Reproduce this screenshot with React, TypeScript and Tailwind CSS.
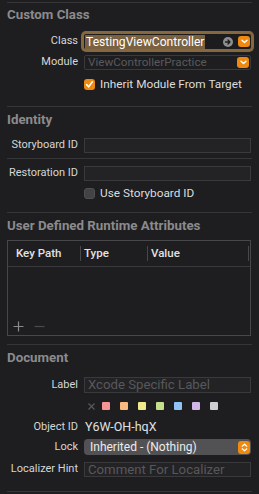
import React from "react";

const swatches = ["#f69393", "#f7b980", "#f1e88a", "#c4df8c", "#8fc3f6", "#d2b6e8", "#cfcfcf"];

function Separator({ className = "" }: { className?: string }) {
    return <div className={`h-px ml-[7px] mr-[7px] bg-[#363638] ${className}`} />;
}

function Heading({ children, className = "" }: { children: React.ReactNode; className?: string }) {
    return (
        <div className={`h-[15px] leading-[15px] pl-[7px] text-[13.3px] font-bold text-[#8b8b8d] ${className}`}>
            {children}
        </div>
    );
}

function Row({ label, children, className = "" }: { label?: string; children: React.ReactNode; className?: string }) {
    return (
        <div className={`flex items-center ${className}`}>
            <div className="w-[78px] shrink-0 text-right text-[11px] text-[#d6d6d6] whitespace-nowrap">{label}</div>
            <div className="ml-[6px] mr-[8px] flex-1 h-full flex items-center">{children}</div>
        </div>
    );
}

function Field({ placeholder }: { placeholder?: string }) {
    return (
        <div className="w-full h-full bg-[#232325] border border-[#3a3a3c] flex items-center pl-[3px] text-[13.2px] leading-none">
            <span className="text-[#58585b]">{placeholder}</span>
        </div>
    );
}

function OrangeChevron() {
    return (
        <div className="w-[12px] h-[11px] rounded-[3px] bg-[#ee8a12] flex items-center justify-center">
            <svg width="7" height="5" viewBox="0 0 7 5">
                <path d="M1 1.2 L3.5 3.6 L6 1.2" stroke="white" strokeWidth="1.4" fill="none" strokeLinecap="round" strokeLinejoin="round" />
            </svg>
        </div>
    );
}

function Checkbox({ checked, label }: { checked?: boolean; label: string }) {
    return (
        <div className="flex items-center">
            <div
                className={`w-[11px] h-[11px] rounded-[3px] flex items-center justify-center ${
                    checked ? "bg-[#ee8a12]" : "bg-[#434345] border border-[#505052]"
                }`}
            >
                {checked && (
                    <svg width="9" height="9" viewBox="0 0 9 9">
                        <path d="M1.6 4.6 L3.6 6.8 L7.4 1.8" stroke="white" strokeWidth="1.6" fill="none" strokeLinecap="round" strokeLinejoin="round" />
                    </svg>
                )}
            </div>
            <span className="ml-[5px] text-[11.8px] text-[#dcdcdc] whitespace-nowrap">{label}</span>
        </div>
    );
}

export default function App() {
    return (
        <div
            className="w-[259px] h-[494px] overflow-hidden bg-[#1e1e20] pt-[2px]"
            style={{ fontFamily: "Roboto, 'Noto Sans', sans-serif" }}
        >
            <Separator />

            {/* Custom Class */}
            <Heading className="mt-[4px]">Custom Class</Heading>
            <Row label="Class" className="mt-[12px] h-[15px]">
                <div className="w-full h-full bg-[#1c1c1e] rounded-[2px] ring-[3px] ring-[#86683f] flex items-center pl-[1px] pr-[1px]">
                    <span className="bg-[#7a6142] text-white text-[12.1px] leading-[14px] px-[1px]">TestingViewController</span>
                    <div className="ml-auto mr-[5px] w-[10px] h-[10px] rounded-full bg-[#8f8f91] flex items-center justify-center">
                        <svg width="8" height="8" viewBox="0 0 8 8">
                            <path d="M1.5 4 H6 M4 2 L6 4 L4 6" stroke="#1e1e20" strokeWidth="1.3" fill="none" strokeLinecap="round" strokeLinejoin="round" />
                        </svg>
                    </div>
                    <OrangeChevron />
                </div>
            </Row>
            <Row label="Module" className="mt-[6px] h-[15px]">
                <div className="w-full h-full border border-[#3a3a3c] rounded-[2px] flex items-center pl-[3px] pr-[1px]">
                    <span className="text-[11.7px] text-[#59595c]">ViewControllerPractice</span>
                    <div className="ml-auto">
                        <OrangeChevron />
                    </div>
                </div>
            </Row>
            <Row className="mt-[7px] h-[15px]">
                <Checkbox checked label="Inherit Module From Target" />
            </Row>
            <Separator className="mt-[14px]" />

            {/* Identity */}
            <Heading className="mt-[5px]">Identity</Heading>
            <Row label="Storyboard ID" className="mt-[11px] h-[15px]">
                <Field />
            </Row>
            <Separator className="mt-[5px]" />
            <Row label="Restoration ID" className="mt-[7px] h-[15px]">
                <Field />
            </Row>
            <Row className="mt-[5px] h-[15px]">
                <Checkbox label="Use Storyboard ID" />
            </Row>
            <Separator className="mt-[11px]" />

            {/* User Defined Runtime Attributes */}
            <Heading className="mt-[5px]">User Defined Runtime Attributes</Heading>
            <div className="mt-[7px] ml-[7px] mr-[8px] h-[96px] border border-[#48484a] flex flex-col">
                <div className="h-[26px] border-b border-[#3a3a3c] flex items-center text-[11.5px] font-medium text-[#e2e2e2]">
                    <div className="w-[73px] pl-[8px] h-[15px] leading-[15px] border-r border-[#48484a]">Key Path</div>
                    <div className="w-[67px] pl-[3px] h-[15px] leading-[15px] border-r border-[#48484a]">Type</div>
                    <div className="flex-1 pl-[3px] h-[15px] leading-[15px] border-r border-[#48484a] mr-[1px]">Value</div>
                </div>
                <div className="flex-1" />
                <div className="h-[16px] flex items-center pl-[5px] gap-[10px] mb-[1px]">
                    <svg width="11" height="11" viewBox="0 0 11 11">
                        <path d="M5.5 0.5 V10.5 M0.5 5.5 H10.5" stroke="#8a8a8c" strokeWidth="1.2" />
                    </svg>
                    <svg width="11" height="11" viewBox="0 0 11 11">
                        <path d="M0.5 5.5 H10.5" stroke="#4a4a4c" strokeWidth="1.2" />
                    </svg>
                </div>
            </div>
            <Separator className="mt-[8px]" />

            {/* Document */}
            <Heading className="mt-[5px]">Document</Heading>
            <Row label="Label" className="mt-[12px] h-[16px]">
                <Field placeholder="Xcode Specific Label" />
            </Row>
            <Row className="mt-[9px] h-[8px]">
                <div className="flex items-center">
                    <svg width="7" height="7" viewBox="0 0 7 7" className="ml-[4px]">
                        <path d="M0.5 0.5 L6.5 6.5 M6.5 0.5 L0.5 6.5" stroke="#58585a" strokeWidth="1.2" />
                    </svg>
                    <div className="ml-[7px] flex gap-[10px]">
                        {swatches.map((c) => (
                            <div key={c} className="w-[8px] h-[8px] rounded-[1px]" style={{ backgroundColor: c }} />
                        ))}
                    </div>
                </div>
            </Row>
            <Row label="Object ID" className="mt-[10px] h-[15px]">
                <span className="pl-[1px] text-[12.5px] text-[#e0e0e0]">Y6W-OH-hqX</span>
            </Row>
            <Row label="Lock" className="mt-[4px] h-[16px]">
                <div className="w-full h-full rounded-[4px] bg-[#525254] flex items-center pl-[6px] pr-[1px]">
                    <span className="text-[12px] text-[#ececec]">Inherited - (Nothing)</span>
                    <div className="ml-auto w-[12px] h-[13px] rounded-[3px] bg-[#ee8a12] flex items-center justify-center">
                        <svg width="7" height="9" viewBox="0 0 7 9">
                            <path d="M1.2 3.2 L3.5 1.2 L5.8 3.2 M1.2 5.8 L3.5 7.8 L5.8 5.8" stroke="white" strokeWidth="1.2" fill="none" strokeLinecap="round" strokeLinejoin="round" />
                        </svg>
                    </div>
                </div>
            </Row>
            <Row label="Localizer Hint" className="mt-[7px] h-[15px]">
                <Field placeholder="Comment For Localizer" />
            </Row>
            <Separator className="mt-[14px]" />
        </div>
    );
}
